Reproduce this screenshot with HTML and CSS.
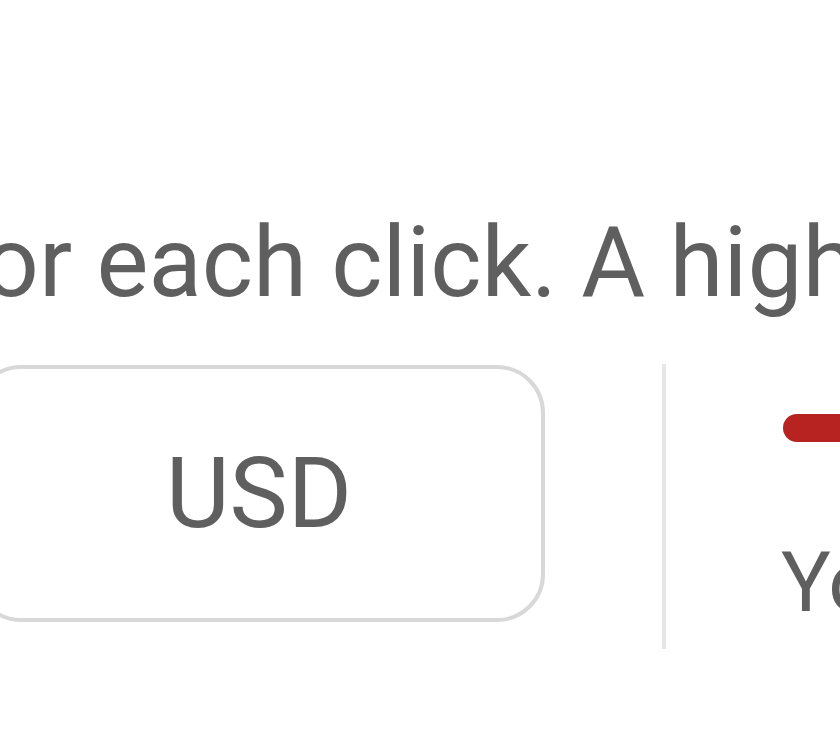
FILE: index.html
```html
<!DOCTYPE html>
<html lang="en">
<head>
<meta charset="utf-8">
<title>Bid</title>
<link rel="stylesheet" href="styles.css">
</head>
<body>
<div class="page">
  <p class="lead">or each click. A higher bid can improve your ad position.</p>
  <div class="row">
    <div class="currency">USD</div>
    <div class="divider"></div>
    <div class="side">
      <div class="bar"></div>
      <p class="note">Your bid is below the suggested range</p>
    </div>
  </div>
</div>
</body>
</html>
```
FILE: styles.css
```css
html, body {
  margin: 0;
  padding: 0;
  background: #ffffff;
  overflow: hidden;
}
body {
  width: 840px;
  height: 740px;
  font-family: Roboto, "Noto Sans", sans-serif;
  color: #5f5f5f;
}
.page {
  margin-left: -27px;
  width: 2000px;
}
.lead {
  margin: 205px 0 0 10px;
  font-size: 98px;
  line-height: 116px;
  white-space: nowrap;
}
.row {
  display: flex;
  column-gap: 117px;
  margin-top: 43px;
}
.currency {
  flex: none;
  box-sizing: border-box;
  width: 572px;
  height: 257px;
  margin-top: 1px;
  border: 4px solid #d8d8d8;
  border-radius: 48px;
  display: flex;
  align-items: center;
  justify-content: center;
  font-size: 98px;
}
.divider {
  flex: none;
  width: 4px;
  background: #e6e6e6;
}
.side {
  flex: none;
  padding: 50px 0 17px;
  width: 800px;
}
.bar {
  height: 28px;
  border-radius: 14px;
  background: #b62320;
}
.note {
  margin: 91px 0 0 -2px;
  font-size: 83px;
  line-height: 99px;
  white-space: nowrap;
}
```
